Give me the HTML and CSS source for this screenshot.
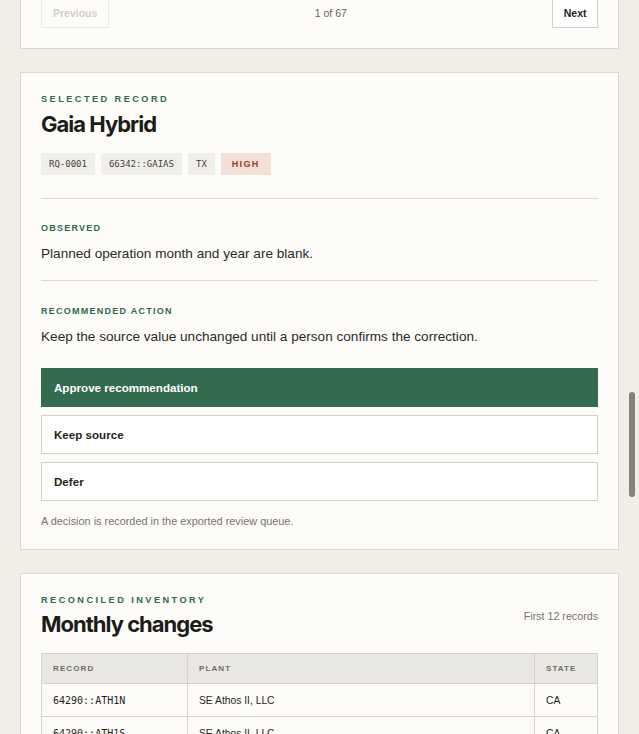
FILE: index.html
```html
<!DOCTYPE html>
<html lang="en">
<head>
<meta charset="utf-8">
<title>Review queue</title>
<link rel="stylesheet" href="styles.css">
</head>
<body>
<main class="page">
  <section class="card pager-card">
    <div class="pager">
      <button class="pager-btn" disabled>Previous</button>
      <span class="pager-count">1 of 67</span>
      <button class="pager-btn">Next</button>
    </div>
  </section>

  <section class="card">
    <p class="eyebrow">Selected record</p>
    <h1 class="title">Gaia Hybrid</h1>
    <div class="tags">
      <span class="tag">RQ-0001</span>
      <span class="tag">66342::GAIAS</span>
      <span class="tag">TX</span>
      <span class="tag tag-high">HIGH</span>
    </div>
    <div class="block">
      <p class="label">Observed</p>
      <p class="text">Planned operation month and year are blank.</p>
    </div>
    <div class="block">
      <p class="label">Recommended action</p>
      <p class="text">Keep the source value unchanged until a person confirms the correction.</p>
    </div>
    <div class="actions">
      <button class="action action-primary">Approve recommendation</button>
      <button class="action">Keep source</button>
      <button class="action">Defer</button>
    </div>
    <p class="note">A decision is recorded in the exported review queue.</p>
  </section>

  <section class="card">
    <div class="table-head">
      <div>
        <p class="eyebrow">Reconciled inventory</p>
        <h2 class="title title-sm">Monthly changes</h2>
      </div>
      <span class="count">First 12 records</span>
    </div>
    <table class="grid">
      <thead>
        <tr><th class="c-rec">Record</th><th class="c-plant">Plant</th><th class="c-state">State</th></tr>
      </thead>
      <tbody>
        <tr><td class="mono">64290::ATH1N</td><td>SE Athos II, LLC</td><td>CA</td></tr>
        <tr><td class="mono">64290::ATH1S</td><td>SE Athos II, LLC</td><td>CA</td></tr>
        <tr><td class="mono">64290::ATH2N</td><td>SE Athos II, LLC</td><td>CA</td></tr>
      </tbody>
    </table>
  </section>
</main>
<div class="scroll-thumb"></div>
</body>
</html>
```
FILE: styles.css
```css
html, body {
  margin: 0;
  padding: 0;
  height: 734px;
  overflow: hidden;
}
body {
  background: #f1eee7;
  font-family: "Liberation Sans", Arial, sans-serif;
  color: #1f1f1c;
}
.page {
  display: flex;
  flex-direction: column;
  gap: 23px;
  padding: 0 20px;
}
.card {
  background: #fdfcf8;
  border: 1px solid #dcd8cf;
  padding: 20px;
}
.pager-card {
  margin-top: -24px;
}
.pager {
  display: flex;
  justify-content: space-between;
  align-items: center;
}
.pager-btn {
  font-family: "Liberation Sans", Arial, sans-serif;
  font-size: 10.5px;
  font-weight: 700;
  color: #1f1f1c;
  background: #fff;
  border: 1px solid #d6d2ca;
  height: 31px;
  padding: 0 10.5px;
}
.pager-btn:disabled {
  color: #d2d0cb;
  background: #fdfcf8;
  border-color: #eceae4;
  padding: 0 11px;
}
.pager-count {
  font-size: 10.5px;
  color: #66635e;
}
.eyebrow {
  margin: 0;
  font-size: 9.2px;
  line-height: 12px;
  font-weight: 700;
  letter-spacing: 2.45px;
  text-transform: uppercase;
  color: #2f6a4c;
}
.title {
  margin: 5px 0 0;
  font-family: Inter, "Liberation Sans", sans-serif;
  font-size: 22px;
  line-height: 28px;
  font-weight: 700;
  letter-spacing: -1px;
  color: #1c1c1a;
}
.title-sm {
  margin-top: 4px;
}
.tags {
  display: flex;
  gap: 6px;
  margin-top: 15px;
  padding-bottom: 23px;
  border-bottom: 1px solid #dedad2;
}
.tag {
  font-family: "DejaVu Sans Mono", monospace;
  font-size: 9px;
  line-height: 22px;
  height: 22px;
  padding: 0 8px;
  background: #f1efe9;
  color: #43413d;
}
.tag-high {
  font-family: "Liberation Sans", Arial, sans-serif;
  font-size: 9px;
  font-weight: 700;
  letter-spacing: 1.3px;
  padding: 0 11px;
  background: #f2e0d7;
  color: #9e3c2b;
}
.block {
  padding: 23px 0 17px;
  border-bottom: 1px solid #dedad2;
}
.block + .block {
  border-bottom: none;
  padding-bottom: 0;
  padding-top: 24px;
}
.label {
  margin: 0;
  font-size: 9px;
  line-height: 12px;
  font-weight: 700;
  letter-spacing: 1.25px;
  text-transform: uppercase;
  color: #2f6a4c;
}
.text {
  margin: 11px 0 0;
  font-size: 13.6px;
  line-height: 18px;
  color: #2a2a27;
}
.actions {
  display: flex;
  flex-direction: column;
  gap: 8px;
  margin-top: 22px;
}
.action {
  text-align: left;
  font-family: "Liberation Sans", Arial, sans-serif;
  font-size: 11.6px;
  font-weight: 700;
  color: #1f1f1c;
  background: #fff;
  border: 1px solid #d4d0c8;
  height: 39px;
  padding: 0 12px;
}
.action-primary {
  background: #336b4f;
  border-color: #336b4f;
  color: #fff;
}
.note {
  margin: 14px 0 2px;
  font-size: 10.9px;
  line-height: 12px;
  color: #77746e;
}
.table-head {
  display: flex;
  justify-content: space-between;
  align-items: center;
}
.count {
  font-size: 10.7px;
  color: #77746e;
}
.grid {
  margin-top: 15px;
  width: 100%;
  border-collapse: collapse;
  font-size: 10.3px;
}
.grid th, .grid td {
  border: 1px solid #d6d3cc;
  text-align: left;
  padding: 0 11px;
}
.grid th {
  background: #e9e7e1;
  height: 29px;
  font-size: 8px;
  font-weight: 700;
  letter-spacing: 1.1px;
  text-transform: uppercase;
  color: #6f6c66;
}
.grid td {
  height: 32px;
  color: #1f1f1c;
  border-top-color: #e3e0d9;
}
.c-rec { width: 123px; }
.c-state { width: 40px; }
.mono {
  font-family: "DejaVu Sans Mono", monospace;
  font-size: 10px;
  color: #2a2a27;
}
.scroll-thumb {
  position: fixed;
  left: 629px;
  top: 392px;
  width: 6px;
  height: 105px;
  border-radius: 3px;
  background: #84817e;
}
```
